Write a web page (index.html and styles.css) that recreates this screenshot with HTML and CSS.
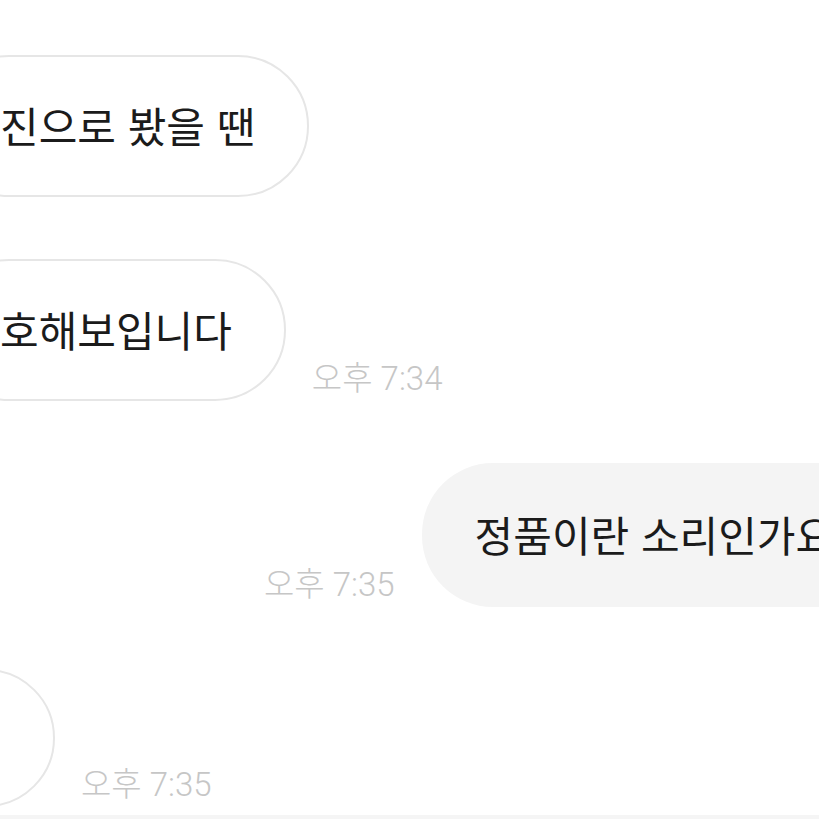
FILE: index.html
```html
<!DOCTYPE html>
<html lang="ko">
<head>
    <meta charset="UTF-8">
    <meta name="viewport" content="width=device-width, initial-scale=1.0">
    <title>채팅</title>
    <link rel="stylesheet" href="styles.css">
</head>
<body>
    <div class="chat">
        <div class="row in first">
            <div class="bubble">진으로 봤을 땐</div>
        </div>

        <div class="row in">
            <div class="bubble">호해보입니다</div>
            <span class="time">오후 7:34</span>
        </div>

        <div class="row out">
            <span class="time">오후 7:35</span>
            <div class="bubble mine">정품이란 소리인가요</div>
        </div>

        <div class="row in">
            <div class="bubble empty"></div>
            <span class="time">오후 7:35</span>
        </div>
    </div>
    <div class="footer"></div>
</body>
</html>
```

FILE: styles.css
```css
body {
    margin: 0;
    background: #ffffff;
    font-family: "Noto Sans CJK KR", "Noto Sans", sans-serif;
    overflow: hidden;
}

.chat {
    height: 815px;
    overflow: hidden;
    display: flex;
    flex-direction: column;
    gap: 62px;
    padding-top: 55px;
    box-sizing: border-box;
}

.row {
    display: flex;
    align-items: flex-end;
    gap: 26px;
    white-space: nowrap;
}

.bubble {
    flex-shrink: 0;
    box-sizing: border-box;
    height: 142px;
    padding: 0 52px 0 60px;
    margin-left: -62px;
    border: 2px solid #e6e6e6;
    border-radius: 71px;
    background: #ffffff;
    color: #1b1b1b;
    font-size: 42px;
    font-weight: 400;
    line-height: 136px;
}

.bubble.mine {
    border: none;
    background: #f4f4f4;
    margin-left: 0;
    padding-left: 53px;
    height: 144px;
    line-height: 142px;
}

.bubble.empty {
    width: 200px;
    margin-left: -145px;
    height: 138px;
}

.row.out {
    padding-left: 264px;
    gap: 27px;
}

.time {
    flex-shrink: 0;
    color: #c6c6c6;
    font-family: Roboto, "Noto Sans CJK KR", sans-serif;
    font-size: 33px;
    font-weight: 300;
    line-height: 1;
    margin-bottom: 6px;
}

.footer {
    height: 20px;
    background: #f5f5f5;
}
```
